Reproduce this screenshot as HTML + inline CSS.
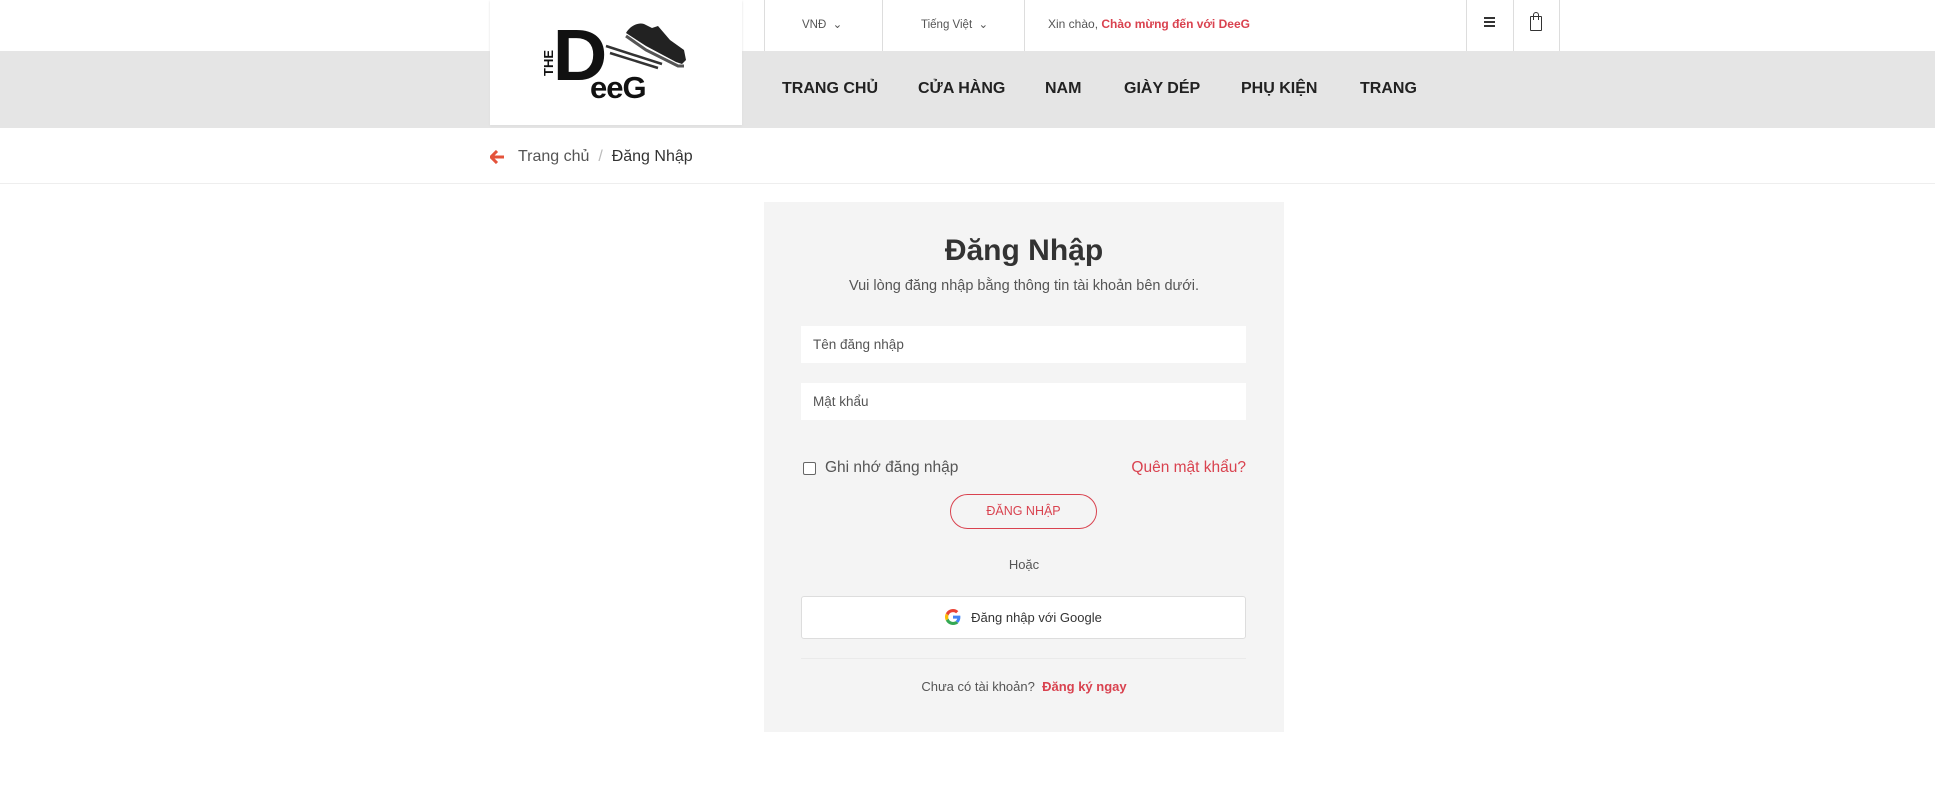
<!DOCTYPE html>
<html><head><meta charset="utf-8"><style>
*{box-sizing:border-box;margin:0;padding:0}
body{width:1935px;height:788px;background:#fff;font-family:"Liberation Sans",sans-serif;position:relative;overflow:hidden;color:#333}
.a{position:absolute}
.nav{left:0;top:51px;width:1935px;height:77px;background:#e5e5e5}
.sep{top:0;width:1px;height:51px;background:#ddd}
.ni{top:80px;font-weight:bold;font-size:16px;color:#222}
.red{color:#d9424f}
.inp{left:801px;width:445px;height:37px;background:#fff;font-size:13.5px;color:#555;padding:11px 0 0 12px}
</style></head><body>
<div class="a nav"></div>
<div class="a" style="left:0;top:183px;width:1935px;height:1px;background:#eee"></div>
<div class="a sep" style="left:764px"></div>
<div class="a sep" style="left:882px"></div>
<div class="a sep" style="left:1024px"></div>
<div class="a sep" style="left:1466px"></div>
<div class="a sep" style="left:1513px"></div>
<div class="a sep" style="left:1559px"></div>
<div class="a" style="left:802px;top:17px;font-size:11.5px;color:#555">VNĐ &nbsp;⌄</div>
<div class="a" style="left:921px;top:17px;font-size:11.5px;color:#555">Tiếng Việt &nbsp;⌄</div>
<div class="a" style="left:1048px;top:17px;font-size:12px;color:#555">Xin chào, <b class="red">Chào mừng đến với DeeG</b></div>
<div class="a" style="left:1484px;top:17px;width:11px;height:10px;border-top:2px solid #333;border-bottom:2px solid #333"><div style="margin-top:2px;height:2px;background:#333"></div></div>
<div class="a" style="left:1530px;top:16px;width:12px;height:15px;border:1.5px solid #333;border-radius:1px"></div>
<div class="a" style="left:1533px;top:12px;width:6px;height:8px;border:1.5px solid #333;border-bottom:none;border-radius:3px 3px 0 0"></div>
<div class="a" style="left:490px;top:0;width:252px;height:125px;background:#fff;box-shadow:0 1px 2px #ddd"></div>
<div class="a" style="left:541px;top:76px;font-size:13px;font-weight:bold;color:#111;transform:rotate(-90deg);transform-origin:left top">THE</div>
<div class="a" style="left:554px;top:26px;font-size:72px;font-weight:900;color:#111;line-height:60px;letter-spacing:-2px;transform:scaleX(1.05)">D</div>
<div class="a" style="left:590px;top:72px;font-size:31px;font-weight:900;color:#111;line-height:31px;letter-spacing:-1px">eeG</div>
<svg class="a" style="left:600px;top:20px" width="95" height="60" viewBox="0 0 95 60"><path d="M26 13 C30 6 38 2 44 4 L52 8 L58 6 L70 20 L84 30 L86 40 L82 44 L76 42 L46 26 Z" fill="#222"/><path d="M26 16 L46 30 L78 46 L84 46" stroke="#555" stroke-width="3" fill="none"/><path d="M6 26 L62 44 M10 33 L58 48" stroke="#333" stroke-width="2.5"/></svg>
<div class="a ni" style="left:782px">TRANG CHỦ</div>
<div class="a ni" style="left:918px">CỬA HÀNG</div>
<div class="a ni" style="left:1045px">NAM</div>
<div class="a ni" style="left:1124px">GIÀY DÉP</div>
<div class="a ni" style="left:1241px">PHỤ KIỆN</div>
<div class="a ni" style="left:1360px">TRANG</div>
<svg class="a" style="left:490px;top:150px" width="15" height="14" viewBox="0 0 15 14"><path d="M7 1 L1 7 L7 13 M1.5 7 H14" stroke="#e4533b" stroke-width="3" fill="none"/></svg>
<div class="a" style="left:518px;top:148px;font-size:16px;color:#555">Trang chủ &nbsp;<span style="color:#bbb">/</span>&nbsp; <span style="color:#333">Đăng Nhập</span></div>
<div class="a" style="left:764px;top:202px;width:520px;height:530px;background:#f4f4f4"></div>
<div class="a" style="left:764px;width:520px;top:234px;text-align:center;font-size:30px;font-weight:bold;color:#333">Đăng Nhập</div>
<div class="a" style="left:764px;width:520px;top:278px;text-align:center;font-size:14.5px;color:#555">Vui lòng đăng nhập bằng thông tin tài khoản bên dưới.</div>
<div class="a inp" style="top:326px">Tên đăng nhập</div>
<div class="a inp" style="top:383px">Mật khẩu</div>
<div class="a" style="left:803px;top:462px;width:13px;height:13px;border:1px solid #666;border-radius:2px;background:#fff"></div>
<div class="a" style="left:825px;top:459px;font-size:15.5px;color:#555">Ghi nhớ đăng nhập</div>
<div class="a red" style="right:689px;top:459px;font-size:15.5px">Quên mật khẩu?</div>
<div class="a" style="left:950px;top:494px;width:147px;height:35px;border:1px solid #d9424f;border-radius:18px;text-align:center;font-size:12.5px;line-height:33px;color:#d9424f">ĐĂNG NHẬP</div>
<div class="a" style="left:764px;width:520px;top:557px;text-align:center;font-size:13px;color:#555">Hoặc</div>
<div class="a" style="left:801px;top:596px;width:445px;height:43px;background:#fff;border:1px solid #ddd;border-radius:3px;text-align:center;font-size:13px;line-height:41px;color:#333"><svg width="16" height="16" viewBox="0 0 48 48" style="vertical-align:-3px;margin-right:10px"><path fill="#EA4335" d="M24 9.5c3.5 0 6.6 1.2 9.1 3.6l6.8-6.8C35.8 2.4 30.3 0 24 0 14.6 0 6.6 5.4 2.7 13.3l7.900 6.1C12.5 13.6 17.8 9.5 24 9.5z"/><path fill="#4285F4" d="M46.1 24.5c0-1.6-.1-3.1-.4-4.5H24v9h12.4c-.5 2.9-2.2 5.3-4.6 7l7.5 5.800c4.4-4 6.8-10 6.8-17.3z"/><path fill="#FBBC05" d="M10.5 28.6c-.5-1.4-.8-3-.8-4.6s.3-3.2.8-4.6l-7.9-6.1C1 16.6 0 20.2 0 24s1 7.4 2.7 10.7l7.8-6.1z"/><path fill="#34A853" d="M24 48c6.5 0 11.9-2.1 15.9-5.8l-7.5-5.8c-2.1 1.4-4.9 2.3-8.4 2.3-6.2 0-11.500-4.2-13.4-9.9l-7.9 6.1C6.6 42.6 14.6 48 24 48z"/></svg>Đăng nhập với Google</div>
<div class="a" style="left:801px;top:658px;width:445px;height:1px;background:#eaeaea"></div>
<div class="a" style="left:764px;width:520px;top:679px;text-align:center;font-size:13px;color:#555">Chưa có tài khoản? &nbsp;<b class="red">Đăng ký ngay</b></div>
</body></html>
